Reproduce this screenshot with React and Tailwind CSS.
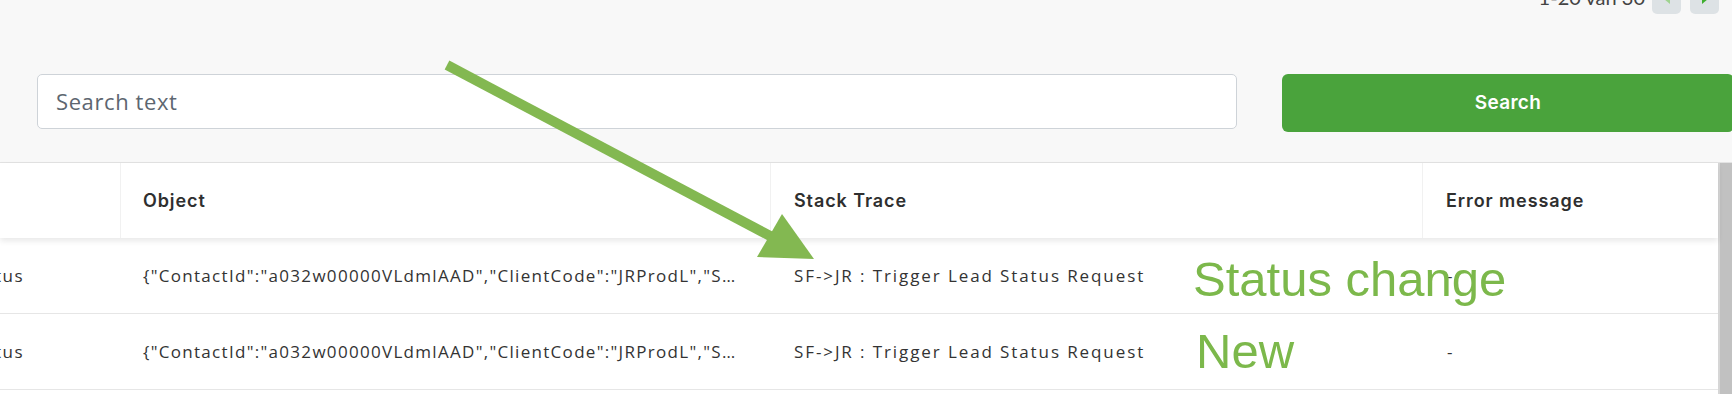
import React from 'react';

const BODY_FONT = { fontFamily: '"Open Sans", Lato, sans-serif' };
const HEAD_FONT = { fontFamily: 'Inter, "Open Sans", sans-serif' };

const OBJECT_TEXT = '{"ContactId":"a032w00000VLdmlAAD","ClientCode":"JRProdL","S…';
const TRACE_TEXT = 'SF->JR : Trigger Lead Status Request';

const rows = [
  { first: 'Lead Status', object: OBJECT_TEXT, trace: TRACE_TEXT, error: '-' },
  { first: 'Lead Status', object: OBJECT_TEXT, trace: TRACE_TEXT, error: '-' },
];

function PagerButton({ dir }) {
  return (
    <div className="w-[29px] h-[30px] rounded-[5px] bg-[#dde2e5] flex items-end justify-center pb-[10px]">
      <svg width="8" height="10" viewBox="0 0 8 10">
        {dir === 'left' ? (
          <polygon points="7,0 7,10 1,5" fill="#9fd38f" />
        ) : (
          <polygon points="1,0 1,10 7,5" fill="#3fae2f" />
        )}
      </svg>
    </div>
  );
}

function Annotations() {
  return (
    <>
      <svg className="absolute left-0 top-0 pointer-events-none" width="1732" height="394" viewBox="0 0 1732 394">
        <line x1="447" y1="65" x2="772" y2="237" stroke="#83b851" strokeWidth="10" />
        <polygon points="782,214 814,259 757,257" fill="#83b851" />
      </svg>
      <div
        className="absolute left-[1193px] top-[255px] text-[49px] leading-[48px] text-[#7cb84b] whitespace-nowrap"
        style={{ fontFamily: '"Liberation Sans", Arial, sans-serif' }}
      >
        Status change
      </div>
      <div
        className="absolute left-[1196px] top-[327px] text-[49px] leading-[48px] text-[#7cb84b] whitespace-nowrap"
        style={{ fontFamily: '"Liberation Sans", Arial, sans-serif' }}
      >
        New
      </div>
    </>
  );
}

export default function App() {
  return (
    <div className="relative w-[1732px] h-[394px] overflow-hidden bg-white" style={BODY_FONT}>
      {/* filter bar */}
      <div className="h-[163px] flex flex-col bg-[#f8f8f8] border-b border-[#e3e3e3]">
        <div className="flex justify-end items-end gap-[9px] pr-[13px] -mt-[16px] h-[30px]">
          <span className="text-[20px] leading-[24px] text-[#444] mr-[-2px] mb-[5px]" style={{ fontFamily: 'Lato, sans-serif' }}>
            1-20 van 30
          </span>
          <PagerButton dir="left" />
          <PagerButton dir="right" />
        </div>
        <div className="flex items-start gap-[45px] pl-[37px] mt-[60px]">
          <div className="w-[1200px] shrink-0 h-[55px] bg-white border border-[#ced3d8] rounded-[5px] flex items-center pl-[18px]">
            <span className="text-[22px] tracking-[0.6px] text-[#5d6670]">Search text</span>
          </div>
          <button
            className="w-[452px] h-[58px] shrink-0 bg-[#4aa33c] rounded-[6px] text-white text-[19px] tracking-[0.3px] font-semibold"
            style={HEAD_FONT}
          >
            Search
          </button>
        </div>
      </div>

      {/* table */}
      <div className="flex">
        <div className="flex-1">
          <div
            className="flex h-[75px] items-center bg-white shadow-[0_3px_6px_rgba(0,0,0,0.09)] relative text-[18px] tracking-[0.9px] font-semibold text-[#2f2f2f]"
            style={HEAD_FONT}
          >
            <div className="w-[121px] h-full border-r border-[#f1f1f1]" />
            <div className="w-[650px] h-full border-r border-[#f1f1f1] flex items-center pl-[22px]">Object</div>
            <div className="w-[652px] h-full border-r border-[#f1f1f1] flex items-center pl-[23px]">Stack Trace</div>
            <div className="flex-1 h-full flex items-center pl-[23px]">Error message</div>
          </div>
          {rows.map((r, i) => (
            <div key={i} className="flex h-[76px] items-center border-b border-[#e6e6e6] text-[17px] text-[#333]">
              <div className="w-[121px] shrink-0 overflow-hidden flex justify-end pr-[97px] whitespace-nowrap tracking-[1.5px]">{r.first}</div>
              <div className="w-[650px] shrink-0 pl-[22px] whitespace-nowrap overflow-hidden tracking-[1.3px]">{r.object}</div>
              <div className="w-[652px] shrink-0 pl-[23px] whitespace-nowrap tracking-[1.9px]">{r.trace}</div>
              <div className="flex-1 pl-[24px]">{r.error}</div>
            </div>
          ))}
        </div>
        <div className="w-[14px] h-[231px] bg-[#c1c1c1] border-l-2 border-[#d6d6d6]" />
      </div>

      <Annotations />
    </div>
  );
}
